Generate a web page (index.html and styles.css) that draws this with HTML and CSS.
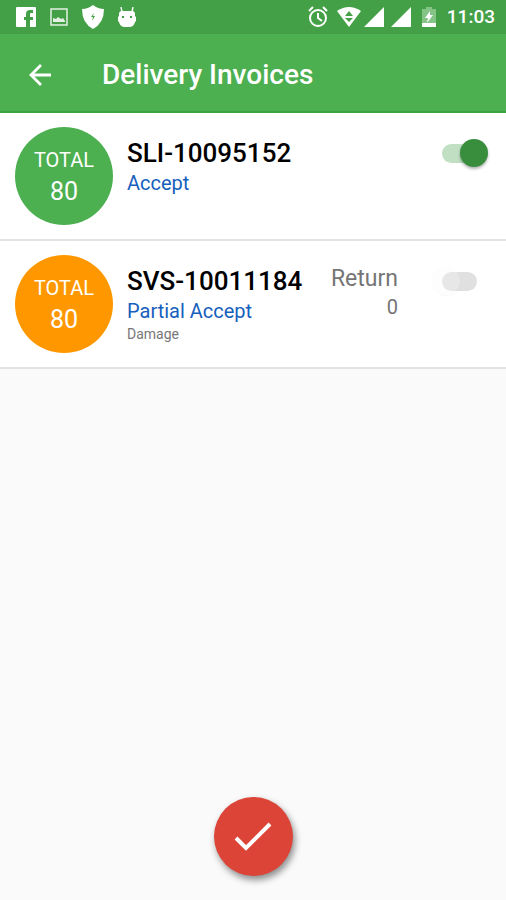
FILE: index.html
```html
<!DOCTYPE html>
<html lang="en">
<head>
<meta charset="utf-8">
<meta name="viewport" content="width=device-width, initial-scale=1">
<title>Delivery Invoices</title>
<link rel="stylesheet" href="styles.css">
</head>
<body>
<div class="status">
  <div class="status-group notices">
    <svg width="20" height="20" viewBox="0 0 20 20"><path fill="#fff" fill-rule="evenodd" d="M1 0h18a1 1 0 0 1 1 1v18a1 1 0 0 1-1 1h-5v-7h3v-3h-3V7q0-1 1-1h2V3h-3q-4 0-4 4v3H8v3h2v7H1a1 1 0 0 1-1-1V1a1 1 0 0 1 1-1z"/></svg>
    <svg width="18" height="18" viewBox="0 0 18 18" opacity=".85"><path fill="none" stroke="#fff" stroke-width="1.5" d="M1 1h16v16H1z"/><path fill="#fff" d="M3 14v-4l3 1 2-2 3 2 2-1 2 3v1z"/></svg>
    <svg width="22" height="24" viewBox="1 0 22 24"><path fill="#fff" d="M12 0q5 4 11 4 0 14-11 20Q1 18 1 4q6 0 11-4z"/><path fill="#43a047" d="m13 8-3 4h2l-1 4 3-5h-2z"/></svg>
    <svg width="18" height="20" viewBox="0 0 18 20"><path fill="none" stroke="#fff" stroke-width="1.4" d="m3 0 1 5M15 0l-1 5"/><path fill="#fff" d="M4 4h10q3 0 3 3v2l1 1v4l-1 1q-1 5-6 5H7q-5 0-6-5l-1-1v-4l1-1V7q0-3 3-3z"/><path fill="#43a047" d="M4 9h2v2H4zM12 9h2v2h-2z"/></svg>
  </div>
  <div class="status-group system">
    <svg width="20" height="22" viewBox="0 0 20 22"><g fill="none" stroke="#fff" stroke-width="2"><circle cx="10" cy="12" r="8"/><path d="m1 5 4-4M19 5l-4-4M10 7v5l4 3"/></g></svg>
    <svg class="wifi" width="24" height="20" viewBox="0 0 24 20"><path fill="#fff" d="M0 4q12-8 24 0L12 20z"/><path fill="#43a047" d="m12 4 4 5H8zM8 11h8l-4 4z"/></svg>
    <svg width="20" height="20" viewBox="0 0 20 20"><path fill="#fff" d="M20 0v20H0z"/></svg>
    <svg class="second-signal" width="20" height="20" viewBox="0 0 20 20"><path fill="#fff" d="M20 0v20H0z"/></svg>
    <svg class="battery" width="14" height="20" viewBox="0 0 14 20"><path fill="#84c487" d="M4 0h6v2h4v14H0V2h4z"/><path fill="#fff" d="M0 16h14v4H0zM8 4 3 11h3l-1 5 6-8H8z"/></svg>
    <span class="clock">11:03</span>
  </div>
</div>
<header class="bar">
  <button class="back" type="button" aria-label="Back"><svg width="24" height="24" viewBox="0 0 24 24"><path fill="none" stroke="#fff" stroke-width="2.8" d="M23 12H3M13 2 3 12l10 10"/></svg></button>
  <h1>Delivery Invoices</h1>
</header>
<main>
  <ul class="invoices">
    <li class="invoice">
      <div class="total accepted"><span>TOTAL</span><b>80</b></div>
      <div class="details">
        <h2><label for="sli">SLI-10095152</label></h2>
        <p class="state">Accept</p>
      </div>
      <input class="switch" id="sli" type="checkbox" checked>
    </li>
    <li class="invoice">
      <div class="total partial"><span>TOTAL</span><b>80</b></div>
      <div class="details">
        <h2><label for="svs">SVS-10011184</label></h2>
        <p class="state">Partial Accept</p>
        <p class="reason">Damage</p>
      </div>
      <div class="return"><span>Return</span><span class="count">0</span></div>
      <input class="switch" id="svs" type="checkbox">
    </li>
  </ul>
</main>
<footer>
  <button class="confirm" type="button" aria-label="Confirm"><svg width="38" height="30" viewBox="0 0 38 30"><path fill="none" stroke="#fff" stroke-width="4" d="m2 16 10 10L36 2"/></svg></button>
</footer>
</body>
</html>
```
FILE: styles.css
```css
* {
  box-sizing: border-box;
  margin: 0;
  padding: 0;
}

body {
  display: flex;
  flex-direction: column;
  min-height: 100vh;
  background: #fafafa;
  color: #000;
  font-family: Roboto, "Liberation Sans", sans-serif;
}

svg {
  display: block;
  flex: none;
}

.status {
  display: flex;
  align-items: center;
  justify-content: space-between;
  height: 34px;
  padding: 0 11px 0 16px;
  background: #43a047;
  color: #fff;
}

.status-group {
  display: flex;
  align-items: center;
}

.notices {
  gap: 14px;
}

.wifi {
  margin: 0 3px 0 9px;
}

.second-signal {
  margin-left: 7px;
}

.battery {
  margin: 0 11px;
}

.clock {
  font-size: 19px;
  font-weight: 500;
  line-height: 24px;
}

.bar {
  display: flex;
  align-items: center;
  gap: 50px;
  height: 79px;
  padding: 4px 28px 0;
  border-bottom: 2px solid #3aa53e;
  background: #4caf50;
  color: #fff;
}

.back {
  border: 0;
  background: none;
  cursor: pointer;
}

.bar h1 {
  font-size: 28px;
  font-weight: 500;
  line-height: 32px;
}

main {
  flex: 1;
}

.invoices {
  list-style: none;
}

.invoice {
  display: flex;
  align-items: flex-start;
  min-height: 128px;
  padding: 14px 18px 0 15px;
  border-bottom: 2px solid #e2e2e2;
  background: #fff;
}

.total {
  display: flex;
  flex: none;
  flex-direction: column;
  align-items: center;
  width: 98px;
  height: 98px;
  padding-top: 17px;
  border-radius: 50%;
  color: #fff;
}

.total span {
  font-size: 20px;
  line-height: 32px;
}

.total b {
  font-size: 25px;
  font-weight: 400;
  line-height: 32px;
}

.accepted {
  background: #4caf50;
}

.partial {
  background: #ff9800;
}

.details {
  flex: 1;
  padding: 10px 0 0 14px;
}

.details h2 {
  font-size: 26px;
  font-weight: 500;
  line-height: 32px;
}

.state {
  color: #1560bd;
  font-size: 20px;
  line-height: 28px;
}

.reason {
  color: #777;
  font-size: 14px;
  line-height: 18px;
}

.return {
  display: flex;
  flex-direction: column;
  align-items: flex-end;
  margin-right: 34px;
  padding-top: 10px;
  color: #757575;
  font-size: 23px;
  line-height: 28px;
}

.count {
  font-size: 20px;
}

.switch {
  position: relative;
  flex: none;
  width: 56px;
  height: 28px;
  margin-top: 12px;
  appearance: none;
  cursor: pointer;
}

.switch::before,
.switch::after {
  position: absolute;
  content: "";
}

.switch::before {
  top: 5px;
  left: 10px;
  width: 35px;
  height: 19px;
  border-radius: 10px;
  background: #e0e0e0;
}

.switch::after {
  top: 0;
  left: 0;
  width: 28px;
  height: 28px;
  border-radius: 50%;
  background: rgb(250 250 250 / 30%);
  box-shadow: 0 1px 2px rgb(0 0 0 / 3%);
}

.switch:checked::before {
  background: #c1dfc3;
}

.switch:checked::after {
  left: 28px;
  background: #388e3c;
  box-shadow: 0 2px 3px rgb(0 0 0 / 30%);
}

footer {
  display: flex;
  justify-content: center;
  padding-bottom: 24px;
}

.confirm {
  display: grid;
  place-items: center;
  width: 79px;
  height: 79px;
  border: 0;
  border-radius: 50%;
  background: #db4437;
  box-shadow: 2px 4px 7px rgb(0 0 0 / 45%);
  cursor: pointer;
}
```
